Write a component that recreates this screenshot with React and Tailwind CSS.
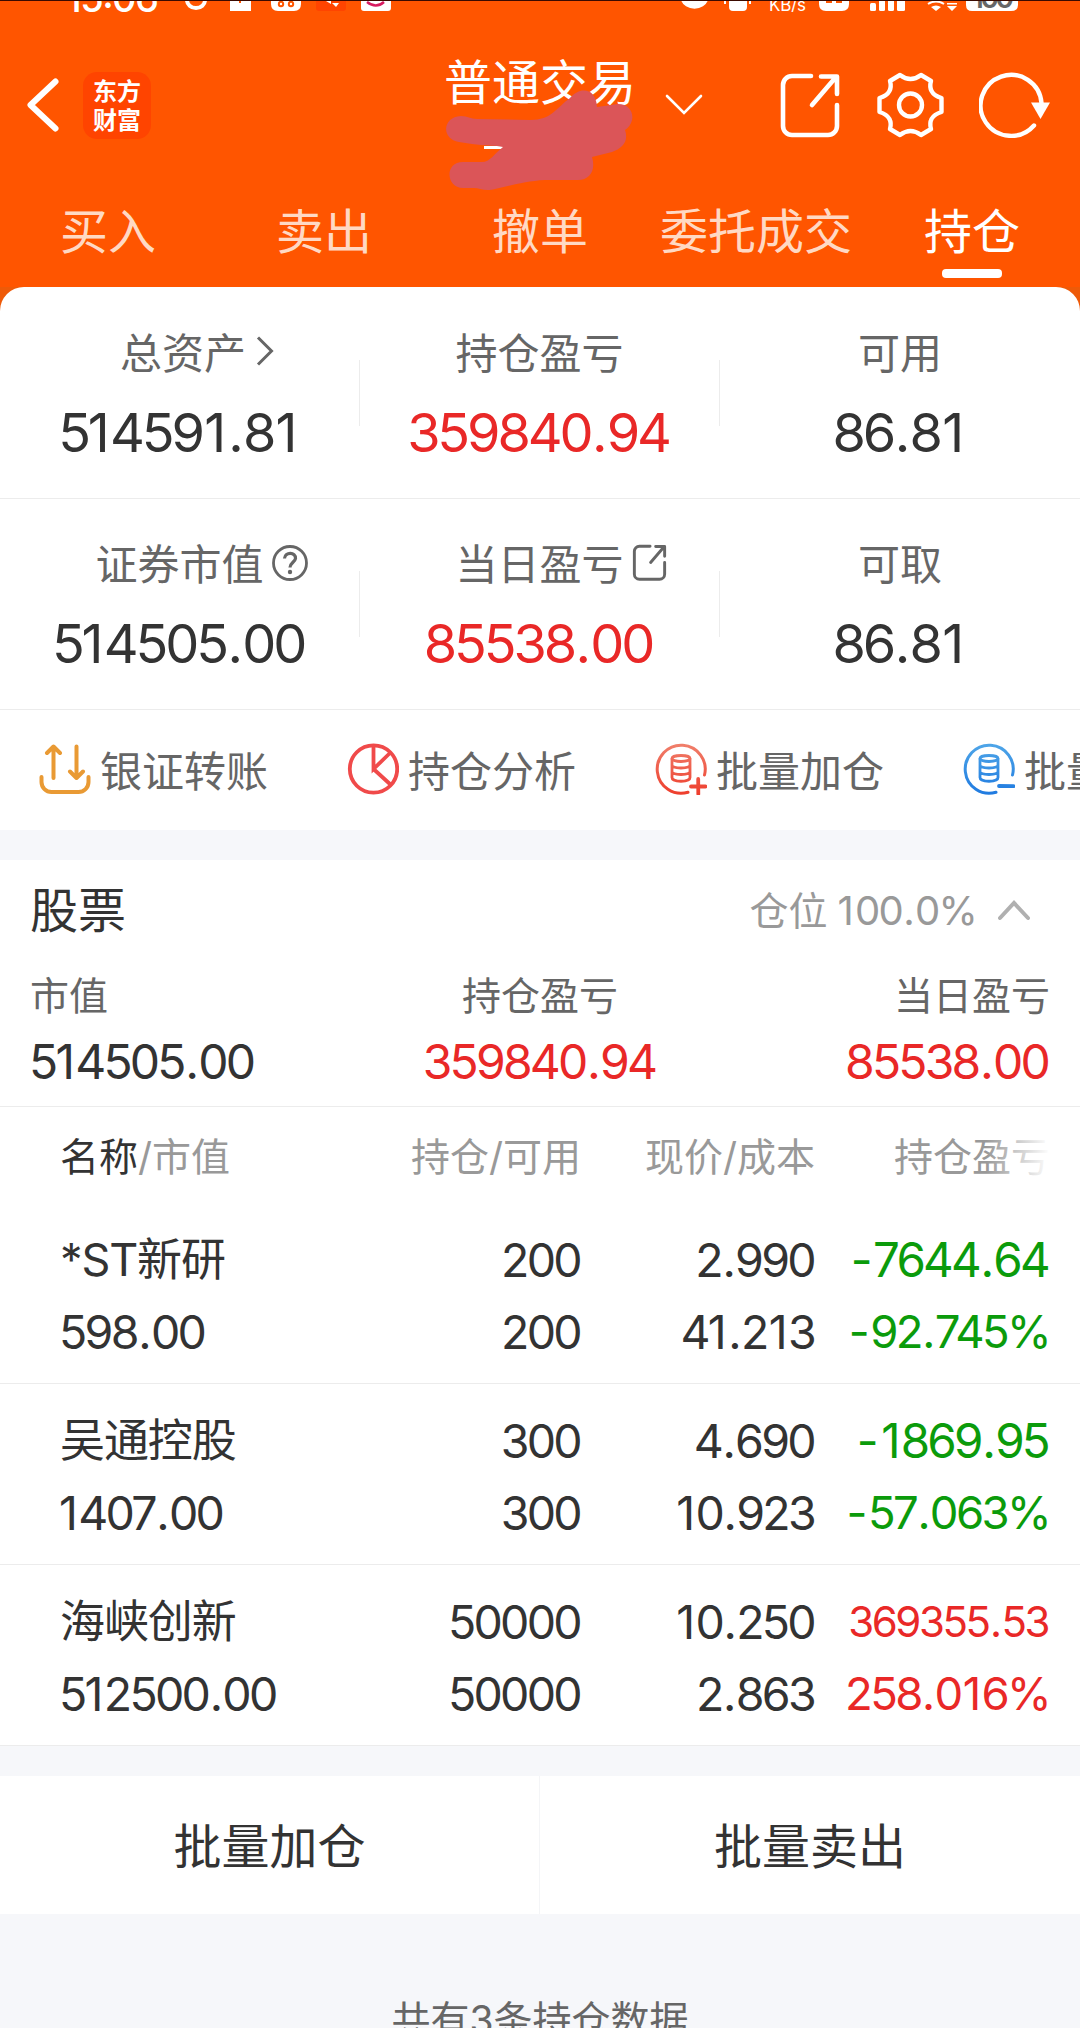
import clsx from "clsx";

const SUMMARY = [
  [
    { label: "总资产", value: "514591.81", icon: "arrow" },
    { label: "持仓盈亏", value: "359840.94", red: true },
    { label: "可用", value: "86.81" },
  ],
  [
    { label: "证券市值", value: "514505.00", icon: "help" },
    { label: "当日盈亏", value: "85538.00", red: true, icon: "share" },
    { label: "可取", value: "86.81" },
  ],
];

const TABS = ["买入", "卖出", "撤单", "委托成交", "持仓"];

const HOLDINGS = [
  { name: "*ST新研", market: "598.00", amount: "200", usable: "200", price: "2.990", cost: "41.213", profit: "-7644.64", rate: "-92.745%" },
  { name: "吴通控股", market: "1407.00", amount: "300", usable: "300", price: "4.690", cost: "10.923", profit: "-1869.95", rate: "-57.063%" },
  { name: "海峡创新", market: "512500.00", amount: "50000", usable: "50000", price: "10.250", cost: "2.863", profit: "369355.53", rate: "258.016%" },
];

// Tight digits, with a little more air around "1", "." and "-"
function Num({ children }) {
  return (
    <span className="tracking-[-0.058em]">
      {children.split(/([1.-])/).map((part, i) => {
        if (part === "1") return <span key={i} className={clsx("tracking-[0.005em]", i > 1 && "pl-[0.045em]")}>1</span>;
        if (part === ".") return <span key={i} className="pl-[0.03em] tracking-[-0.015em]">.</span>;
        if (part === "-") return <span key={i} className="tracking-[0.01em]">-</span>;
        return part;
      })}
    </span>
  );
}

/* ===== ICONS ===== */

function ShareIcon({ className, strokeWidth = 4.6 }) {
  return (
    <svg viewBox="0 0 60 66" className={className} fill="none" stroke="currentColor" strokeWidth={strokeWidth} strokeLinecap="round" strokeLinejoin="round">
      <path d="M31 4H12a9 9 0 0 0-9 9v41a9 9 0 0 0 9 9h36a9 9 0 0 0 9-9V33" />
      <path d="M32 33L56 5M41 4.500H57V22" />
    </svg>
  );
}

function GearIcon() {
  return (
    <svg viewBox="0 0 67 68" className="h-[68px] w-[67px]" fill="none" stroke="white" strokeWidth="4.400" strokeLinejoin="round">
      <path d="M23 4Q33.500 12 44 4L54 10C52 17 54 24 64.500 27V41C54 44 52 51 54 58L44 64Q33.500 56 23 64L13 58C15 51 13 44 2.500 41V27C13 24 15 17 13 10Z" />
      <circle cx="33.500" cy="34" r="11.500" />
    </svg>
  );
}

function RefreshIcon() {
  return (
    <svg viewBox="0 0 72 68" className="h-[68px] w-[72px]" fill="none" stroke="white" strokeWidth="4.400" strokeLinecap="round">
      <path d="M55 54.500A30.500 30.500 0 1 1 62.500 32" />
      <path d="M52 31.500H71L61.500 48Z" fill="white" stroke="none" />
    </svg>
  );
}

function TransferIcon() {
  return (
    <svg viewBox="0 0 52 52" className="h-[52px] w-[52px]" fill="none" stroke="#e99a34" strokeWidth="4" strokeLinecap="round" strokeLinejoin="round">
      <path d="M14.500 35V4M8 10L14.500 3.500L21 10" />
      <path d="M37.500 3.500V35M31 28.500L37.500 35L44 28.500" />
      <path d="M2.500 34V39a10 10 0 0 0 10 10H39.500a10 10 0 0 0 10-10V34" />
    </svg>
  );
}

function PieIcon() {
  return (
    <svg viewBox="0 0 52 52" className="h-[52px] w-[52px]" fill="none" stroke="#f04a4a" strokeWidth="3.800">
      <circle cx="26.500" cy="26" r="23.700" />
      <path d="M26.500 2V26L43.500 9.500M26.500 26L44 42" />
    </svg>
  );
}

function StackIcon({ id, from, to, plus }) {
  return (
    <svg viewBox="0 0 52 52" className="h-[52px] w-[52px]" fill="none" stroke={`url(#${id})`} strokeLinecap="round">
      <defs>
        <linearGradient id={id} gradientUnits="userSpaceOnUse" x1="0" y1="0" x2="0" y2="52">
          <stop offset="0" stopColor={from} />
          <stop offset="1" stopColor={to} />
        </linearGradient>
      </defs>
      <path strokeWidth="3" d="M49.500 32A24 24 0 1 0 33 49.200" />
      <path strokeWidth="2.800" d="M17 16V34.500C17 39.500 35 39.500 35 34.500V16M17 22C17 26 35 26 35 22M17 28.500C17 32.500 35 32.500 35 28.500" />
      <ellipse strokeWidth="2.800" cx="26" cy="15.500" rx="9" ry="3" />
      <path strokeWidth="3.800" d={plus ? "M36 43.500H50.500M43.200 36L43.300 51" : "M36 43L50.500 43.100"} />
    </svg>
  );
}

function LabelIcon({ type }) {
  if (type === "arrow") {
    return (
      <svg viewBox="0 0 18 30" className="ml-[10px] mb-[6px] h-[30px] w-[18px] shrink-0" fill="none" stroke="currentColor" strokeWidth="3">
        <path d="M2 1.500L15.500 15L2 28.500" />
      </svg>
    );
  }
  if (type === "help") {
    return (
      <svg viewBox="0 0 38 38" className="ml-[7px] mb-[5px] h-[38px] w-[38px] shrink-0" fill="none" stroke="currentColor" strokeWidth="2.800">
        <circle cx="19" cy="19" r="16.500" />
        <path strokeWidth="3.200" d="M13.500 14.500C14 7.500 25 8 24.500 14.500C24 18 19 19 19 23.500" />
        <circle cx="19" cy="28" r="2.200" fill="currentColor" stroke="none" />
      </svg>
    );
  }
  return <ShareIcon className="ml-[8px] mb-[5px] h-[37px] w-[35px] shrink-0" strokeWidth={5.2} />;
}

/* ===== HEADER ===== */

function StatusBar() {
  return (
    <div className="h-[12px] overflow-hidden border-t border-[#3a0a00]">
      <svg viewBox="0 1 1080 11" className="h-[11px] w-[1080px]" fill="white">
        <text x="66" y="12" fontSize="38" fontWeight="500" fontFamily="Inter" textLength="93">15:06</text>
        <path d="M187 0A9 8 0 0 0 205 0" fill="none" stroke="white" strokeWidth="4" />
        <path d="M230 0H251V11H230Z" />
        <path d="M239 1H241V3H239Z" fill="#ff5500" />
        <path d="M271 0H301V4Q301 11 294 11H278Q271 11 271 4Z" />
        <circle cx="281" cy="4" r="2.200" fill="none" stroke="#ff5500" strokeWidth="2" />
        <circle cx="291" cy="4" r="2.200" fill="none" stroke="#ff5500" strokeWidth="2" />
        <path d="M316 0H346V8Q346 11 343 11H319Q316 11 316 8Z" fill="#ff4400" />
        <path d="M326 1H331V4ZM332 3H339L336 7Z" />
        <path d="M361 0H391V8Q391 11 388 11H364Q361 11 361 8Z" />
        <path d="M367 2Q376 9 384 2" fill="none" stroke="#d81b60" strokeWidth="2.500" />
        <path d="M681 0A14 12 0 0 0 708 0Z" />
        <path d="M729 0H747V7Q747 11 743 11H733Q729 11 729 7ZM724 0H726V4H724ZM749 0H751V4H749Z" />
        <text x="769" y="11" fontSize="17" fontFamily="Inter" textLength="37">KB/s</text>
        <path d="M819 0H849V4Q849 11 842 11H826Q819 11 819 4Z" />
        <path d="M826 2H832M836 2H842" stroke="#ff5500" strokeWidth="2" />
        <rect x="870" y="3" width="6" height="8" rx="1.500" />
        <rect x="879" y="0" width="6" height="11" rx="1.500" />
        <rect x="888" y="0" width="6" height="11" rx="1.500" />
        <rect x="897" y="0" width="8" height="11" rx="1.500" />
        <path d="M931 7Q936 4 941 7L936 11ZM947 6H957L952 11ZM947 3H957V4.500H947Z" />
        <path d="M928 4Q936 -1 944 4" fill="none" stroke="white" strokeWidth="2" />
        <path d="M966 0H1018V5Q1018 11 1011 11H972Q966 11 966 5Z" />
        <text x="972" y="8" fontSize="28" fontWeight="600" fontFamily="Inter" fill="#666" textLength="42">100</text>
      </svg>
    </div>
  );
}

function Header() {
  return (
    <header className="h-[287px] bg-[#ff5500] text-white">
      <StatusBar />
      <div className="relative flex h-[177px] items-start">
        <svg viewBox="0 0 34 56" className="ml-[26px] mt-[65px] h-[56px] w-[34px]" fill="none" stroke="white" strokeWidth="6" strokeLinecap="round" strokeLinejoin="round">
          <path d="M29.500 4.500L4.500 28L29.500 51.500" />
        </svg>
        <div className="ml-[23px] mt-[60px] flex h-[67px] w-[68px] flex-col items-center justify-center rounded-[14px] bg-[#ff4400] text-[24px] leading-[29px] font-bold">
          <span>东方</span>
          <span>财富</span>
        </div>
        <h1 className="ml-[293px] mt-[36px] text-[48px] leading-[70px]">普通交易</h1>
        <svg viewBox="0 0 38 22" className="ml-[29px] mt-[81px] h-[22px] w-[38px]" fill="none" stroke="white" strokeWidth="2.600" strokeLinecap="round">
          <path d="M2 3L19 20L36 3" />
        </svg>
        <div className="ml-[77px] mt-[60px] flex">
          <ShareIcon className="h-[66px] w-[60px]" />
          <div className="ml-[37px] -mt-px"><GearIcon /></div>
          <div className="ml-[35px] -mt-px"><RefreshIcon /></div>
        </div>
        {/* account number scribbled out */}
        <svg viewBox="446 88 188 104" className="absolute left-[446px] top-[76px] h-[104px] w-[188px]">
          <path d="M484 146H503V149H484Z" fill="#fff" />
          <path fill="#db5558" d="M461 116C468 116 470 119 477 119L530 120C552 120 556 108 570 98C580 86 596 88 597 107L618 104C634 104 637 122 625 130C629 142 622 148 612 152L592 157C596 170 590 180 578 180H545C525 181 510 186 495 189C485 192 480 188 474 188H463C446 188 444 162 463 162H482C490 162 494 154 503 147C496 145 484 146 472 144L459 142C441 139 442 117 461 116Z" />
        </svg>
      </div>
      <nav className="grid grid-cols-5 text-center text-[48px] leading-[86px]">
        {TABS.map((tab, i) => (
          <div key={tab} className={clsx("flex flex-col items-center", i === 4 ? "text-white" : "text-[#ffd9c4]")}>
            {tab}
            {i === 4 && <span className="-mt-[6px] h-[9px] w-[60px] rounded-[4px] bg-white" />}
          </div>
        ))}
      </nav>
    </header>
  );
}

/* ===== SUMMARY ===== */

function SummaryCell({ cell, last }) {
  return (
    <div className="flex">
      <div className="flex-1 pt-[36px] text-center">
        <div className={clsx("flex items-center justify-center text-[42px] leading-[60px] text-[#666]", cell.icon === "arrow" && "pl-[7px]")}>
          {cell.label}
          <span className="flex w-0 overflow-visible">{cell.icon && <LabelIcon type={cell.icon} />}</span>
        </div>
        <div className={clsx("mt-[13px] pr-[3px] text-[54px] leading-[72px]", cell.red ? "text-[#e92827]" : "text-[#333]")}>
          <Num>{cell.value}</Num>
        </div>
      </div>
      {!last && <div className="mt-[72px] h-[66px] w-px bg-[#ececec]" />}
    </div>
  );
}

function Summary() {
  return (
    <div className="bg-[#ee5a08]">
      <div className="rounded-t-[24px] bg-white pt-px">
        {SUMMARY.map((row, i) => (
          <div key={i} className="grid h-[211px] grid-cols-3 border-b border-[#ececec]">
            {row.map((cell, j) => (
              <SummaryCell key={cell.label} cell={cell} last={j === 2} />
            ))}
          </div>
        ))}
      </div>
    </div>
  );
}

function Actions() {
  const items = [
    { label: "银证转账", icon: <TransferIcon /> },
    { label: "持仓分析", icon: <PieIcon /> },
    { label: "批量加仓", icon: <StackIcon id="add" from="#f0806c" to="#ee3d2c" plus /> },
    { label: "批量卖出", icon: <StackIcon id="sub" from="#4fa6e8" to="#1f7ae0" /> },
  ];
  return (
    <div className="flex h-[120px] overflow-hidden bg-white pl-[39px]">
      {items.map((item) => (
        <div key={item.label} className="flex w-[308px] shrink-0 items-center gap-[9px] text-[42px] whitespace-nowrap text-[#666]">
          <span className="pb-[2px]">{item.icon}</span>
          <span className="pt-[3px]">{item.label}</span>
        </div>
      ))}
    </div>
  );
}

/* ===== HOLDINGS ===== */

function StockTotals() {
  return (
    <div className="h-[247px] border-b border-[#ececec] px-[30px] pt-[16px]">
      <div className="flex h-[70px] items-center justify-between">
        <h2 className="text-[48px] text-[#333]">股票</h2>
        <div className="flex items-center text-[39px] text-[#999]">
          仓位
          <span className="ml-[10px] text-[40px] tracking-[-0.045em]">
            <span className="tracking-[0.03em]">1</span>00<span className="pl-[0.03em] tracking-[0.01em]">.</span>0%
          </span>
          <svg viewBox="0 0 34 22" className="mr-[19px] mb-[3px] ml-[21px] h-[22px] w-[34px]" fill="none" stroke="#b0b0b0" strokeWidth="4" strokeLinecap="round">
            <path d="M3 19L17 4L31 19" />
          </svg>
        </div>
      </div>
      <div className="mt-[21px] grid grid-cols-3 text-[39px] leading-[58px] text-[#666]">
        <span>市值</span>
        <span className="text-center">持仓盈亏</span>
        <span className="text-right">当日盈亏</span>
      </div>
      <div className="mt-[4px] grid grid-cols-3 text-[48px] leading-[66px] text-[#e92827]">
        <span className="-ml-px text-[#333]"><Num>514505.00</Num></span>
        <span className="pr-[2px] text-center"><Num>359840.94</Num></span>
        <span className="pr-[2px] text-right"><Num>85538.00</Num></span>
      </div>
    </div>
  );
}

function HoldingRow({ item }) {
  const down = item.profit.startsWith("-");
  return (
    <div className="grid h-[181px] grid-cols-[290px_231px_234px_235px] border-b border-[#ececec] pt-[21px] pl-[60px] text-[46.5px] leading-[72px] text-[#333]">
      <div>
        <div className="text-[45px] tracking-[-0.025em]">{item.name}</div>
        <div className="-ml-px"><Num>{item.market}</Num></div>
      </div>
      <div className="pr-px text-right">
        <div><Num>{item.amount}</Num></div>
        <div><Num>{item.usable}</Num></div>
      </div>
      <div className="pr-px text-right">
        <div><Num>{item.price}</Num></div>
        <div><Num>{item.cost}</Num></div>
      </div>
      <div className={clsx("pr-[2px] text-right", down ? "text-[#0b9b0b]" : "text-[#e92827]")}>
        <div className={down ? "text-[47.5px]" : "text-[42px]"}><Num>{item.profit}</Num></div>
        <div className="-mr-px text-[45.5px]"><Num>{item.rate}</Num></div>
      </div>
    </div>
  );
}

export default function App() {
  return (
    <div className="h-[2028px] w-[1080px] overflow-hidden bg-[#f6f7fa] font-[Inter,'Noto_Sans_CJK_SC',sans-serif]">
      <Header />
      <Summary />
      <Actions />

      <section className="mt-[30px] bg-white">
        <StockTotals />
        <div className="relative grid h-[96px] grid-cols-[290px_231px_234px_235px] pl-[60px] text-[39px] leading-[100px] text-[#999]">
          <span><span className="text-[#333]">名称</span>/市值</span>
          <span className="text-right">持仓/可用</span>
          <span className="text-right">现价/成本</span>
          <span className="text-right">持仓盈亏</span>
          <span className="absolute top-0 right-[30px] h-full w-[64px] bg-gradient-to-r from-white/0 to-white" />
        </div>
        {HOLDINGS.map((item) => (
          <HoldingRow key={item.name} item={item} />
        ))}
      </section>

      <div className="mt-[30px] flex h-[138px] items-center bg-white text-[48px] text-[#333]">
        <div className="w-[539px] pt-[4px] text-center">批量加仓</div>
        <div className="h-full w-px bg-[#f4f5f7]" />
        <div className="flex-1 pt-[4px] text-center">批量卖出</div>
      </div>
      <p className="mt-[77px] text-center text-[39px] leading-[58px] text-[#666]">共有3条持仓数据</p>
    </div>
  );
}
